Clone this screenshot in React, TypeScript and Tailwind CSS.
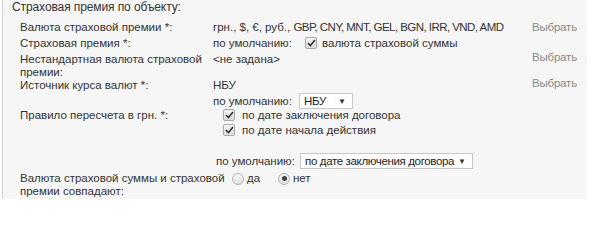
import React from "react";

const Check = () => (
  <span className="inline-flex w-[12px] h-[12px] items-center justify-center rounded-[2px] border border-[#a9a9a9] bg-gradient-to-b from-[#f4f4f4] to-[#dcdcdc] shrink-0">
    <svg width="9" height="8" viewBox="0 0 9 8">
      <path d="M1 4.2 L3.4 6.5 L8 1" fill="none" stroke="#333" strokeWidth="1.6" />
    </svg>
  </span>
);

const Radio = ({ on }: { on?: boolean }) => (
  <span className="inline-flex w-[12px] h-[12px] items-center justify-center rounded-full border border-[#b5b5b5] bg-gradient-to-b from-[#f8f8f8] to-[#e2e2e2] shrink-0">
    {on && <span className="w-[5px] h-[5px] rounded-full bg-[#444]" />}
  </span>
);

const Select = ({ text, w }: { text: string; w: string }) => (
  <span className={`inline-flex h-[16px] items-center justify-between whitespace-nowrap border border-[#c8c8c8] bg-white pl-[4px] pr-[6px] ${w}`}>
    <span className="text-[#222] tracking-[-0.35px]">{text}</span>
    <span className="text-[8px] text-[#333]">▼</span>
  </span>
);

const Pick = ({ cls = "" }: { cls?: string }) => (
  <div className={`w-[50px] text-[#8a8a8a] tracking-[-0.2px] ${cls}`}>Выбрать</div>
);

export default function App() {
  return (
    <div className="w-[592px] h-[218px] bg-white font-['Liberation_Sans',Arial,sans-serif] text-[11.5px] leading-[13px] text-[#333]">
      <div className="ml-[2px] w-[585px] h-[199px] bg-[#f6f6f6] border-l border-[#d0d0d0]">
        <div className="pl-[9px] pt-[1px] h-[14px] text-[12px] tracking-[-0.1px]">Страховая премия по объекту:</div>

        <div className="flex mt-[7px]">
          <div className="pl-[17px] w-[210px]">Валюта страховой премии *:</div>
          <div className="w-[319px] whitespace-nowrap">
            грн., $, €, руб., <span className="tracking-[-0.55px]">GBP, CNY, MNT, GEL, BGN, IRR, VND, AMD</span>
          </div>
          <Pick />
        </div>

        <div className="flex mt-[3px]">
          <div className="pl-[17px] w-[210px]">Страховая премия *:</div>
          <div className="flex items-center">
            <span className="w-[92px]">по умолчанию:</span>
            <span className="mr-[5px]"><Check /></span>
            <span>валюта страховой суммы</span>
          </div>
        </div>

        <div className="flex mt-[3px]">
          <div className="pl-[17px] w-[210px]">Нестандартная валюта страховой премии:</div>
          <div className="w-[319px]">&lt;не задана&gt;</div>
          <Pick cls="-mt-[2px]" />
        </div>

        <div className="flex">
          <div className="pl-[17px] w-[210px]">Источник курса валют *:</div>
          <div className="w-[319px]">
            <div>НБУ</div>
            <div className="flex items-center mt-[1px]">
              <span className="w-[86px]">по умолчанию:</span>
              <Select text="НБУ" w="w-[54px]" />
            </div>
          </div>
          <Pick cls="-mt-[2px]" />
        </div>

        <div className="flex">
          <div className="pl-[17px] w-[220px]">Правило пересчета в грн. *:</div>
          <div>
            <div className="flex items-center h-[15px] -mt-[1px]">
              <span className="mr-[7px]"><Check /></span>
              <span>по дате заключения договора</span>
            </div>
            <div className="flex items-center h-[15px]">
              <span className="mr-[7px]"><Check /></span>
              <span>по дате начала действия</span>
            </div>
          </div>
        </div>

        <div className="flex items-center mt-[15px] pl-[213px]">
          <span className="w-[84px]">по умолчанию:</span>
          <Select text="по дате заключения договора" w="w-[173px]" />
        </div>

        <div className="flex mt-[3px]">
          <div className="pl-[17px] w-[229px]">Валюта страховой суммы и страховой премии совпадают:</div>
          <div className="flex items-center h-[13px]">
            <Radio />
            <span className="ml-[3px] w-[31px]">да</span>
            <Radio on />
            <span className="ml-[3px]">нет</span>
          </div>
        </div>
      </div>
    </div>
  );
}
